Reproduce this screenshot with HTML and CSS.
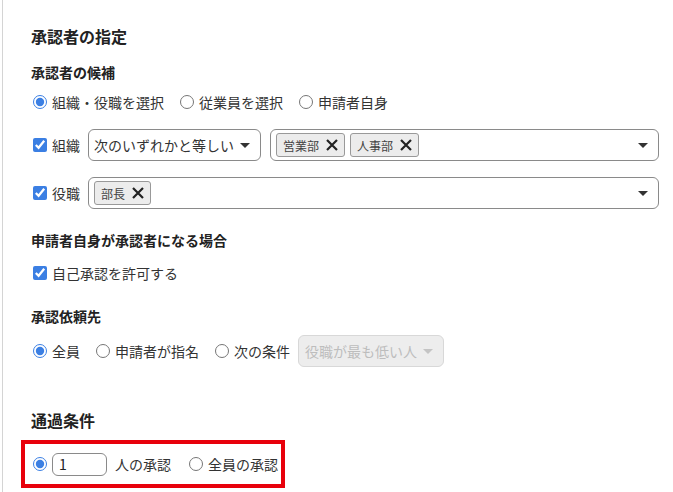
FILE: index.html
```html
<!DOCTYPE html>
<html lang="ja">
<head>
	<meta charset="utf-8">
	<title>承認者の指定</title>
	<link rel="stylesheet" href="styles.css">
</head>
<body>
	<div class="panel">
		<h1 class="title">承認者の指定</h1>

		<h2 class="heading">承認者の候補</h2>
		<div class="row options">
			<label class="opt"><input type="radio" name="cand" checked>組織・役職を選択</label>
			<label class="opt"><input type="radio" name="cand">従業員を選択</label>
			<label class="opt"><input type="radio" name="cand">申請者自身</label>
		</div>

		<div class="row field first">
			<label class="opt check"><input type="checkbox" checked>組織</label>
			<div class="select small">
				<span>次のいずれかと等しい</span>
				<span class="caret"></span>
			</div>
			<div class="select multi">
				<div class="tags">
					<span class="tag">営業部<svg viewBox="0 0 14 14" class="x"><path d="M2 2 L12 12 M12 2 L2 12"/></svg></span>
					<span class="tag">人事部<svg viewBox="0 0 14 14" class="x"><path d="M2 2 L12 12 M12 2 L2 12"/></svg></span>
				</div>
				<span class="caret"></span>
			</div>
		</div>

		<div class="row field">
			<label class="opt check"><input type="checkbox" checked>役職</label>
			<div class="select multi">
				<div class="tags">
					<span class="tag">部長<svg viewBox="0 0 14 14" class="x"><path d="M2 2 L12 12 M12 2 L2 12"/></svg></span>
				</div>
				<span class="caret"></span>
			</div>
		</div>

		<h2 class="heading self">申請者自身が承認者になる場合</h2>
		<div class="row options self-row">
			<label class="opt check"><input type="checkbox" checked>自己承認を許可する</label>
		</div>

		<h2 class="heading request">承認依頼先</h2>
		<div class="row field request-row">
			<label class="opt"><input type="radio" name="req" checked>全員</label>
			<label class="opt"><input type="radio" name="req">申請者が指名</label>
			<label class="opt"><input type="radio" name="req">次の条件</label>
			<div class="select disabled">
				<span>役職が最も低い人</span>
				<span class="caret"></span>
			</div>
		</div>

		<h1 class="title pass">通過条件</h1>
		<div class="highlight">
			<label class="opt"><input type="radio" name="pass" checked><input type="text" class="count" value="1">人の承認</label>
			<label class="opt"><input type="radio" name="pass">全員の承認</label>
		</div>
	</div>
</body>
</html>
```

FILE: styles.css
```css
body {
	margin: 0;
	background: #fff;
	font-family: "Noto Sans CJK JP", "Noto Sans", sans-serif;
	color: #333;
}

.panel {
	margin-left: 2px;
	border-left: 1px solid #d4d4d4;
	padding: 24px 14px 0 28px;
	min-height: 492px;
	box-sizing: border-box;
}

.title {
	margin: 0;
	font-size: 16px;
	line-height: 24px;
	font-weight: bold;
	color: #222;
}

.heading {
	margin: 14px 0 0;
	font-size: 14px;
	line-height: 20px;
	font-weight: bold;
	color: #222;
}

.row {
	display: flex;
	align-items: center;
}

.options {
	margin-top: 10px;
	height: 20px;
	gap: 14px;
}

.opt {
	display: flex;
	align-items: center;
	font-size: 14px;
	line-height: 20px;
	white-space: nowrap;
}

.opt input[type="radio"],
.opt input[type="checkbox"] {
	width: 14px;
	height: 14px;
	margin: 0 5px 0 2px;
	accent-color: #3b7fe3;
}

.field {
	margin-top: 16px;
	gap: 8px;
}

.field.first {
	margin-top: 17px;
}

.select {
	height: 32px;
	box-sizing: border-box;
	border: 1px solid #8a8a8a;
	border-radius: 6px;
	display: flex;
	align-items: center;
	justify-content: space-between;
	padding: 0 10px 0 5px;
	font-size: 14px;
}

.select.small {
	width: 173px;
	flex: none;
}

.select.multi {
	flex: 1;
}

.field.first .select.multi {
	margin-left: 1px;
}

.caret {
	width: 0;
	height: 0;
	border-left: 5px solid transparent;
	border-right: 5px solid transparent;
	border-top: 5px solid #333;
}

.tags {
	display: flex;
	gap: 5px;
}

.tag {
	display: flex;
	align-items: center;
	height: 24px;
	box-sizing: border-box;
	padding: 0 5px 0 6px;
	border: 1px solid #999;
	border-radius: 3px;
	background: #ececec;
	font-size: 12px;
	color: #444;
}

.x {
	width: 14px;
	height: 14px;
	margin-left: 6px;
}

.x path {
	stroke: #222;
	stroke-width: 2.2;
	fill: none;
}

.heading.self {
	margin-top: 21px;
}

.self-row {
	margin-top: 13px;
}

.heading.request {
	margin-top: 23px;
}

.request-row {
	margin-top: 9px;
	gap: 0;
}

.request-row .opt {
	margin-right: 14px;
}

.request-row .opt:nth-child(3) {
	margin-right: 8px;
}

.select.disabled {
	width: 146px;
	background: #ededed;
	border-color: #d8d8d8;
	color: #bdbdbd;
	padding-left: 6px;
}

.select.disabled .caret {
	border-top-color: #c4c4c4;
}

.title.pass {
	margin-top: 41px;
}

.highlight {
	margin: 8px 0 0 -10px;
	width: 264px;
	height: 48px;
	box-sizing: border-box;
	border: 4px solid #e8000b;
	display: flex;
	align-items: center;
	gap: 16px;
	padding-left: 6px;
}

.count {
	width: 55px;
	height: 23px;
	box-sizing: border-box;
	border: 1px solid #8a8a8a;
	border-radius: 6px;
	margin: 0 8px 0 0;
	padding: 0 6px;
	font-family: "Noto Sans CJK JP", sans-serif;
	font-size: 14px;
	color: #222;
}
```
